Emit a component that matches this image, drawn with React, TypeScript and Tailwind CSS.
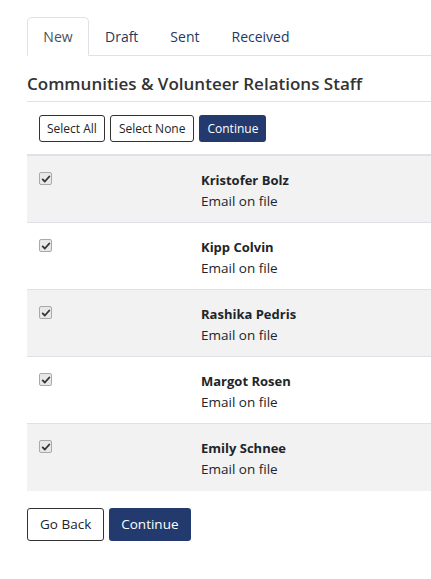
import { useState } from 'react';

const staff = ['Kristofer Bolz', 'Kipp Colvin', 'Rashika Pedris', 'Margot Rosen', 'Emily Schnee'];
const tabs = ['New', 'Draft', 'Sent', 'Received'];

function Checkbox({ checked, onChange }: { checked: boolean; onChange: () => void }) {
  return (
    <button
      onClick={onChange}
      className="w-[13px] h-[13px] rounded-[2px] border border-[#a9a9a9] bg-[#e8e8e8] flex items-center justify-center"
    >
      {checked && (
        <svg viewBox="0 0 12 12" className="w-[10px] h-[10px]">
          <path d="M2 6.5 L4.6 9 L10 3" fill="none" stroke="#333" strokeWidth="2.2" strokeLinecap="round" strokeLinejoin="round" />
        </svg>
      )}
    </button>
  );
}

export default function App() {
  const [checked, setChecked] = useState<boolean[]>(staff.map(() => true));

  const toggle = (i: number) => setChecked(c => c.map((v, j) => (j === i ? !v : v)));

  return (
    <div className="w-[431px] h-[579px] overflow-hidden bg-white pl-[27px] pt-[17px] text-[#212529]" style={{ fontFamily: '"Open Sans", "Noto Sans", sans-serif' }}>
      <div className="flex border-b border-[#dee2e6] h-[39px]">
        {tabs.map((t, i) => (
          <div
            key={t}
            className={
              i === 0
                ? 'h-[39px] w-[62px] -mb-px flex items-center justify-center rounded-t-[5px] border border-[#dee2e6] border-b-white bg-white text-[14px] text-[#495057]'
                : 'h-[38px] px-[16px] flex items-center justify-center text-[14px] text-[#24395f]'
            }
          >
            {t}
          </div>
        ))}
      </div>

      <h2 className="mt-[16px] text-[17px] font-semibold text-[#333] leading-[24px] pb-[5px] border-b border-[#dee2e6] whitespace-nowrap">
        Communities &amp; Volunteer Relations Staff
      </h2>

      <div className="flex gap-[5px] pl-[12px] mt-[13px]">
        <button className="h-[27px] px-[7px] border border-[#333] rounded-[3px] bg-white text-[12px]" onClick={() => setChecked(staff.map(() => true))}>
          Select All
        </button>
        <button className="h-[27px] px-[8px] border border-[#333] rounded-[3px] bg-white text-[12px]" onClick={() => setChecked(staff.map(() => false))}>
          Select None
        </button>
        <button className="h-[27px] px-[8px] rounded-[3px] bg-[#233a6f] text-white text-[12px]">Continue</button>
      </div>

      <div className="mt-[12px] w-[420px] border-t-2 border-[#dee2e6]">
        {staff.map((name, i) => (
          <div key={name} className={`flex h-[67px] border-b border-[#dee2e6] ${i % 2 === 0 ? 'bg-[#f2f2f2]' : 'bg-white'} ${i === staff.length - 1 ? 'border-b-0' : ''}`}>
            <div className="w-[174px] pl-[12px] pt-[16px]">
              <Checkbox checked={checked[i]} onChange={() => toggle(i)} />
            </div>
            <div className="pt-[14px] text-[13.5px] leading-[21px]">
              <div className="font-bold text-[13px]">{name}</div>
              <div>Email on file</div>
            </div>
          </div>
        ))}
      </div>

      <div className="flex gap-[5px] mt-[17px]">
        <button className="h-[33px] px-[12px] border border-[#333] rounded-[3px] bg-white text-[13.5px]">Go Back</button>
        <button className="h-[33px] px-[12px] rounded-[3px] bg-[#233a6f] text-white text-[13.5px]">Continue</button>
      </div>
    </div>
  );
}
